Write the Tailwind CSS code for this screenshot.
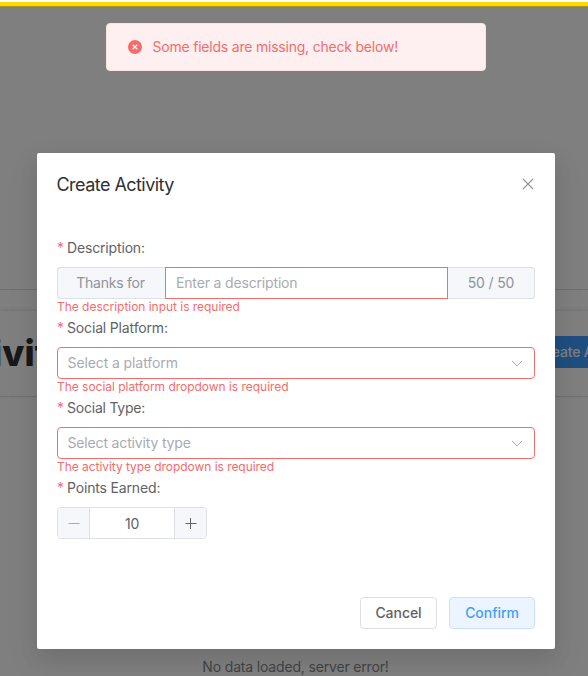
<!DOCTYPE html>
<html lang="en">
<head>
<meta charset="utf-8">
<title>Create Activity</title>
<script src="https://cdn.jsdelivr.net/npm/@tailwindcss/browser@4"></script>
</head>
<body class="h-[676px] w-[588px] overflow-hidden bg-white font-['Inter',sans-serif] text-sm tracking-[-0.16px] text-[#606266]">
<!-- Page behind the dialog -->
<main class="flex h-[676px] flex-col overflow-hidden">
  <div class="h-[290px] shrink-0 border-b border-[#dcdfe6]"></div>
  <div class="h-[21px] shrink-0"></div>
  <header class="flex h-[86px] shrink-0 items-center justify-between border-b border-[#dcdfe6] shadow-[0_-1px_4px_rgba(0,0,0,0.12)]">
    <h1 class="-ml-[70px] mt-[-2px] text-[36px] font-extrabold leading-10 tracking-[0.1px] text-[#303133]">Activities</h1>
    <button class="-mr-[63px] mt-[-3px] h-8 w-[132px] shrink-0 whitespace-nowrap bg-[#409eff] text-sm font-medium text-white">Create Activity</button>
  </header>
  <p class="mt-[260px] pl-[3px] text-center leading-5 tracking-[-0.17px] text-[#85878c]">No data loaded, server error!</p>
</main>

<div class="absolute inset-0 flex flex-col items-center bg-black/50">
  <div class="h-[153px] w-full shrink-0">
    <div class="h-[2px] bg-white"></div>
    <div class="h-[4px] bg-[#ffd900]"></div>
    <div class="h-px bg-[#a99220]"></div>
    <div class="ml-[106px] mt-4 flex h-12 w-[380px] items-center rounded border border-[#fde2e2] bg-[#fef0f0] pl-[21px] text-[#f56c6c]">
      <svg class="mr-[10.5px] size-[14px]" viewBox="0 0 14 14"><circle cx="7" cy="7" r="7" fill="#f56c6c"/><path d="M4.7 4.7l4.6 4.6M9.3 4.7L4.7 9.3" stroke="#fef0f0" stroke-width="1.3"/></svg>
      <span class="tracking-[-0.21px]">Some fields are missing, check below!</span>
    </div>
  </div>

  <section class="ml-1 flex h-[496px] w-[518px] shrink-0 flex-col rounded-[2px] bg-white px-5 shadow-[0_12px_32px_4px_rgba(0,0,0,0.06),0_8px_20px_rgba(0,0,0,0.08)]">
    <div class="flex h-[85px] items-start justify-between pt-5">
      <h2 class="-ml-[0.5px] text-[18px] leading-6 tracking-[-0.54px] text-[#303133]">Create Activity</h2>
      <svg class="mr-[1px] mt-[5px] size-3" viewBox="0 0 12 12" fill="none" stroke="#909399" stroke-width="1.1"><path d="M1 1l10 10M11 1L1 11"/></svg>
    </div>

    <div class="h-20">
      <label class="flex h-5 items-center"><span class="mr-1 w-[6px] text-[#f56c6c]">*</span><span>Description:</span></label>
      <div class="mt-[9px] flex h-8">
        <div class="flex w-[108px] items-center justify-center rounded-l border border-r-0 border-[#dcdfe6] bg-[#f5f7fa] pr-[2px] tracking-[-0.22px] text-[#909399]">Thanks for</div>
        <div class="flex flex-1 items-center border border-[#f56c6c] pl-[10px] text-[#a8abb2]">Enter a description</div>
        <div class="flex w-[87px] items-center justify-center rounded-r border border-l-0 border-[#dcdfe6] bg-[#f5f7fa] text-[#909399]">50 / 50</div>
      </div>
      <p class="text-xs tracking-[-0.03px] text-[#f56c6c]">The description input is required</p>
    </div>

    <div class="h-20">
      <label class="flex h-5 items-center"><span class="mr-1 w-[6px] text-[#f56c6c]">*</span><span>Social Platform:</span></label>
      <div class="mt-[9px] flex h-8 items-center justify-between rounded border border-[#f56c6c] pl-[9.5px] pr-[11px] text-[#a8abb2]">
        <span class="tracking-[-0.1px]">Select a platform</span>
        <svg class="h-[7px] w-3" viewBox="0 0 12 7" fill="none" stroke="#a8abb2"><path d="M1 1l5 5 5-5"/></svg>
      </div>
      <p class="text-xs tracking-[-0.03px] text-[#f56c6c]">The social platform dropdown is required</p>
    </div>

    <div class="h-20">
      <label class="flex h-5 items-center"><span class="mr-1 w-[6px] text-[#f56c6c]">*</span><span class="tracking-[-0.22px]">Social Type:</span></label>
      <div class="mt-[9px] flex h-8 items-center justify-between rounded border border-[#f56c6c] pl-[9.5px] pr-[11px] text-[#a8abb2]">
        <span>Select activity type</span>
        <svg class="h-[7px] w-3" viewBox="0 0 12 7" fill="none" stroke="#a8abb2"><path d="M1 1l5 5 5-5"/></svg>
      </div>
      <p class="text-xs tracking-[-0.05px] text-[#f56c6c]">The activity type dropdown is required</p>
    </div>

    <div>
      <label class="flex h-5 items-center"><span class="mr-1 w-[6px] text-[#f56c6c]">*</span><span>Points Earned:</span></label>
      <div class="mt-[9px] flex h-8 w-[150px] overflow-hidden rounded border border-[#dcdfe6]">
        <div class="flex w-8 items-center justify-center border-r border-[#dcdfe6] bg-[#f5f7fa]"><svg class="size-3" viewBox="0 0 12 12" stroke="#a8abb2"><path d="M.5 6.5h11"/></svg></div>
        <div class="flex flex-1 items-center justify-center pt-[2px]">10</div>
        <div class="flex w-8 items-center justify-center border-l border-[#dcdfe6] bg-[#f5f7fa]"><svg class="size-3" viewBox="0 0 12 12" stroke="#606266"><path d="M.5 6.5h11M5.5 1v11"/></svg></div>
      </div>
    </div>

    <div class="mb-5 mt-auto flex justify-end gap-3 font-medium tracking-[-0.05px]">
      <button class="h-8 w-[77px] rounded border border-[#dcdfe6] bg-white">Cancel</button>
      <button class="h-8 w-[86px] rounded border border-[#c6e2ff] bg-[#ecf5ff] text-[#409eff]">Confirm</button>
    </div>
  </section>
</div>
</body>
</html>
